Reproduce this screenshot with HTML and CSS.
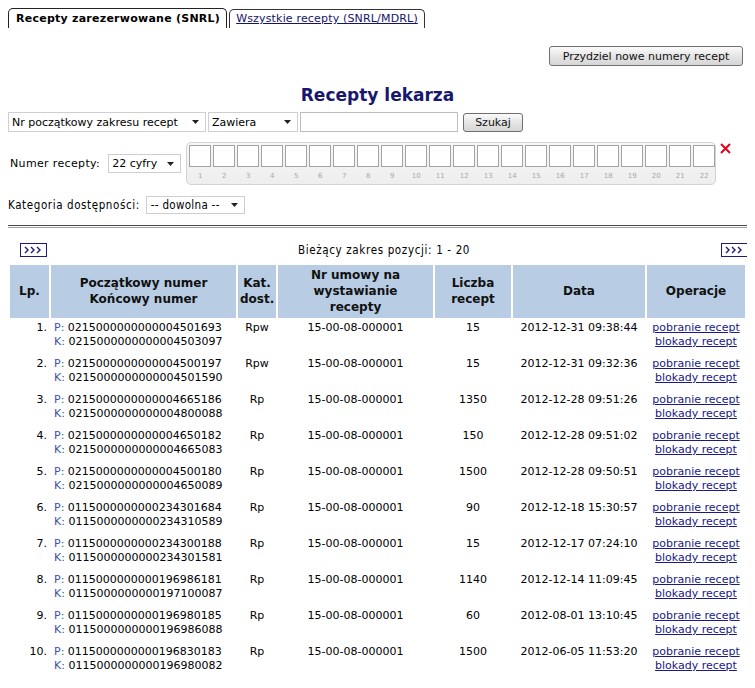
FILE: index.html
```html
<!DOCTYPE html>
<html lang="pl">
<head>
<meta charset="utf-8">
<title>Recepty lekarza</title>
<link rel="stylesheet" href="styles.css">
</head>
<body>
<div class="tabs">
  <div class="tab tab-active">Recepty zarezerwowane (SNRL)</div>
  <div class="tab"><a href="#">Wszystkie recepty (SNRL/MDRL)</a></div>
</div>

<div class="actions"><button class="btn btn-assign">Przydziel nowe numery recept</button></div>

<h1 class="title">Recepty lekarza</h1>

<div class="search">
  <div class="sel sel-field"><span>Nr początkowy zakresu recept</span><svg class="arr" width="7" height="4" viewBox="0 0 7 4"><path d="M0 0H7L3.5 4Z"/></svg></div>
  <div class="sel sel-op"><span>Zawiera</span><svg class="arr" width="7" height="4" viewBox="0 0 7 4"><path d="M0 0H7L3.5 4Z"/></svg></div>
  <div class="text-input"></div>
  <button class="btn btn-search">Szukaj</button>
</div>

<div class="numrow">
  <span class="lbl">Numer recepty:</span>
  <div class="sel sel-digits"><span>22 cyfry</span><svg class="arr" width="7" height="4" viewBox="0 0 7 4"><path d="M0 0H7L3.5 4Z"/></svg></div>
  <div class="digits" id="digits"></div>
  <svg class="clear" width="11" height="11" viewBox="0 0 11 11"><path d="M1 1L10 10M10 1L1 10"/></svg>
</div>

<div class="catrow">
  <span class="lbl-c">Kategoria dostępności:</span>
  <div class="sel sel-cat"><span>-- dowolna --</span><svg class="arr" width="7" height="4" viewBox="0 0 7 4"><path d="M0 0H7L3.5 4Z"/></svg></div>
</div>

<div class="sep"></div>

<div class="pager">
  <svg class="nav" width="27" height="14" viewBox="0 0 27 14"><rect x="0.5" y="0.5" width="26" height="13"/><path d="M5 4L8 7L5 10M11 4L14 7L11 10M17 4L20 7L17 10"/></svg>
  <span class="range">Bieżący zakres pozycji: 1 - 20</span>
  <svg class="nav" width="27" height="14" viewBox="0 0 27 14"><rect x="0.5" y="0.5" width="26" height="13"/><path d="M5 4L8 7L5 10M11 4L14 7L11 10M17 4L20 7L17 10"/></svg>
</div>

<table class="grid">
  <thead>
    <tr>
      <th class="c-lp">Lp.</th>
      <th class="c-num">Początkowy numer<br>Końcowy numer</th>
      <th class="c-kat">Kat.<br>dost.</th>
      <th class="c-um">Nr umowy na<br>wystawianie<br>recepty</th>
      <th class="c-cnt">Liczba<br>recept</th>
      <th class="c-date">Data</th>
      <th class="c-op">Operacje</th>
    </tr>
  </thead>
  <tbody id="rows"></tbody>
</table>

<script>
(function () {
  var d = document.getElementById('digits');
  var h = '';
  for (var i = 1; i <= 22; i++) {
    h += '<div class="dg"><div class="box"></div><div class="dn">' + i + '</div></div>';
  }
  d.innerHTML = h;

  var data = [
    ['0215000000000004501693','0215000000000004503097','Rpw','15','2012-12-31 09:38:44'],
    ['0215000000000004500197','0215000000000004501590','Rpw','15','2012-12-31 09:32:36'],
    ['0215000000000004665186','0215000000000004800088','Rp','1350','2012-12-28 09:51:26'],
    ['0215000000000004650182','0215000000000004665083','Rp','150','2012-12-28 09:51:02'],
    ['0215000000000004500180','0215000000000004650089','Rp','1500','2012-12-28 09:50:51'],
    ['0115000000000234301684','0115000000000234310589','Rp','90','2012-12-18 15:30:57'],
    ['0115000000000234300188','0115000000000234301581','Rp','15','2012-12-17 07:24:10'],
    ['0115000000000196986181','0115000000000197100087','Rp','1140','2012-12-14 11:09:45'],
    ['0115000000000196980185','0115000000000196986088','Rp','60','2012-08-01 13:10:45'],
    ['0115000000000196830183','0115000000000196980082','Rp','1500','2012-06-05 11:53:20']
  ];
  var r = '';
  for (var j = 0; j < data.length; j++) {
    var x = data[j];
    r += '<tr>' +
      '<td class="c-lp">' + (j + 1) + '.</td>' +
      '<td class="c-num"><span class="pk">P:</span> ' + x[0] + '<br><span class="pk">K:</span> ' + x[1] + '</td>' +
      '<td class="c-kat">' + x[2] + '</td>' +
      '<td class="c-um">15-00-08-000001</td>' +
      '<td class="c-cnt">' + x[3] + '</td>' +
      '<td class="c-date">' + x[4] + '</td>' +
      '<td class="c-op"><a href="#">pobranie recept</a><br><a href="#">blokady recept</a></td>' +
      '</tr>';
  }
  document.getElementById('rows').innerHTML = r;
})();
</script>
</body>
</html>
```

FILE: styles.css
```css
html, body {
  background: #ffffff;
}
body {
  margin: 8px;
  font-family: "DejaVu Sans", Verdana, sans-serif;
  font-size: 11px;
  color: #000;
}

/* tabs */
.tabs {
  display: flex;
  align-items: flex-end;
  gap: 2px;
  margin-top: 1px;
  height: 19px;
}
.tab {
  height: 18px;
  line-height: 18px;
  padding: 0 6px;
  border: 1px solid #333;
  border-bottom: none;
  border-radius: 5px 5px 0 0;
  font-size: 11px;
  letter-spacing: 0.17px;
  white-space: nowrap;
}
.tab-active {
  height: 19px;
  line-height: 20px;
  font-weight: bold;
  letter-spacing: 0.25px;
  padding: 0 6px 0 7px;
  border-color: #222;
}
.tab a {
  color: #14146a;
  text-decoration: underline;
}

/* buttons */
.btn {
  font-family: "DejaVu Sans", Verdana, sans-serif;
  font-size: 11px;
  color: #111;
  background: linear-gradient(#fbfbfb, #e3e3e3 55%, #d6d6d6);
  border: 1px solid #707070;
  border-radius: 3px;
  padding: 0 8px;
  margin: 0;
}
.actions {
  display: flex;
  justify-content: flex-end;
  padding-right: 4px;
  margin-top: 18px;
}
.btn-assign {
  height: 20px;
  width: 194px;
}

.title {
  margin: 18px 0 0;
  text-align: center;
  font-size: 17px;
  line-height: 22px;
  color: #17176e;
  font-weight: bold;
}

/* selects */
.sel {
  display: flex;
  align-items: center;
  justify-content: space-between;
  box-sizing: border-box;
  background: #fff;
  border: 1px solid #cfcfcf;
  padding: 0 6px 0 3px;
  white-space: nowrap;
}
.arr path {
  fill: #222;
}

.search {
  display: flex;
  align-items: center;
  gap: 2px;
  margin-top: 6px;
  height: 20px;
}
.sel-field { width: 198px; height: 20px; }
.sel-op { width: 90px; height: 20px; }
.text-input {
  box-sizing: border-box;
  width: 158px;
  height: 20px;
  border: 1px solid #bdbdbd;
  background: #fff;
}
.btn-search {
  width: 60px;
  height: 19px;
  margin-left: 3px;
  padding: 0;
}

/* digits row */
.numrow {
  display: flex;
  align-items: center;
  margin-top: 10px;
  padding-left: 2px;
}
.lbl {
  margin-right: 8px;
  letter-spacing: 0.35px;
}
.sel-digits {
  width: 73px;
  height: 19px;
  padding-left: 3px;
  margin-right: 5px;
}
.digits {
  display: flex;
  gap: 2px;
  box-sizing: border-box;
  width: 530px;
  height: 43px;
  padding: 2px;
  border: 1px solid #d2d2d2;
  border-radius: 5px;
  background: linear-gradient(#f7f7f7, #eeeeee);
}
.dg {
  width: 22px;
  display: flex;
  flex-direction: column;
  align-items: center;
}
.box {
  box-sizing: border-box;
  width: 22px;
  height: 22px;
  border: 1px solid #a3a3a3;
  background: #fff;
}
.dn {
  margin-top: 5px;
  font-size: 7px;
  line-height: 9px;
  color: #a8a8a8;
}
.clear {
  align-self: flex-start;
  margin: 1px 0 0 4px;
}
.clear path {
  stroke: #e3001b;
  stroke-width: 2;
  fill: none;
}

/* category */
.catrow {
  display: flex;
  align-items: center;
  margin-top: 11px;
  font-family: "DejaVu Sans Condensed", "DejaVu Sans", sans-serif;
  font-stretch: condensed;
  font-size: 11.5px;
  letter-spacing: 0.6px;
}
.lbl-c {
  margin-right: 6px;
}
.sel-cat {
  width: 99px;
  height: 18px;
  padding-left: 4px;
  letter-spacing: 0.3px;
}

.sep {
  margin: 11px -4px 0 -4px;
  height: 1px;
  border-top: 1px solid #4a4a4a;
  border-bottom: 1px solid #a0a0a0;
}

/* pager */
.pager {
  display: flex;
  align-items: center;
  justify-content: space-between;
  margin: 15px -1px 0 12px;
  height: 14px;
  font-family: "DejaVu Sans Condensed", "DejaVu Sans", sans-serif;
  font-stretch: condensed;
  font-size: 11.5px;
  letter-spacing: 0.65px;
}
.nav rect {
  fill: #fff;
  stroke: #1c1c78;
}
.nav path {
  fill: none;
  stroke: #1c1c78;
  stroke-width: 1.4;
}

/* table */
.grid {
  margin-top: 6px;
  width: 100%;
  table-layout: fixed;
  border-collapse: separate;
  border-spacing: 2px;
}
.grid th {
  box-sizing: border-box;
  background: #b8cce4;
  font-size: 12px;
  line-height: 16px;
  font-weight: bold;
  color: #111;
  height: 53px;
  padding: 2px 2px 3px;
  text-align: center;
  vertical-align: middle;
}
.grid td {
  font-size: 11px;
  line-height: 14px;
  padding: 1px 2px 5px;
  vertical-align: top;
  text-align: center;
  white-space: nowrap;
}
th.c-lp { width: 39px; }
th.c-num { width: 185px; }
th.c-kat { width: 38px; }
th.c-um { width: 155px; }
th.c-cnt { width: 76px; }
th.c-date { width: 132px; }
th.c-op { width: 98px; }
td.c-lp { text-align: right; }
td.c-num { text-align: left; padding-left: 3px; }
.pk { color: #3b52a5; }
.c-op a {
  color: #1a1a80;
  text-decoration: underline;
}
```
